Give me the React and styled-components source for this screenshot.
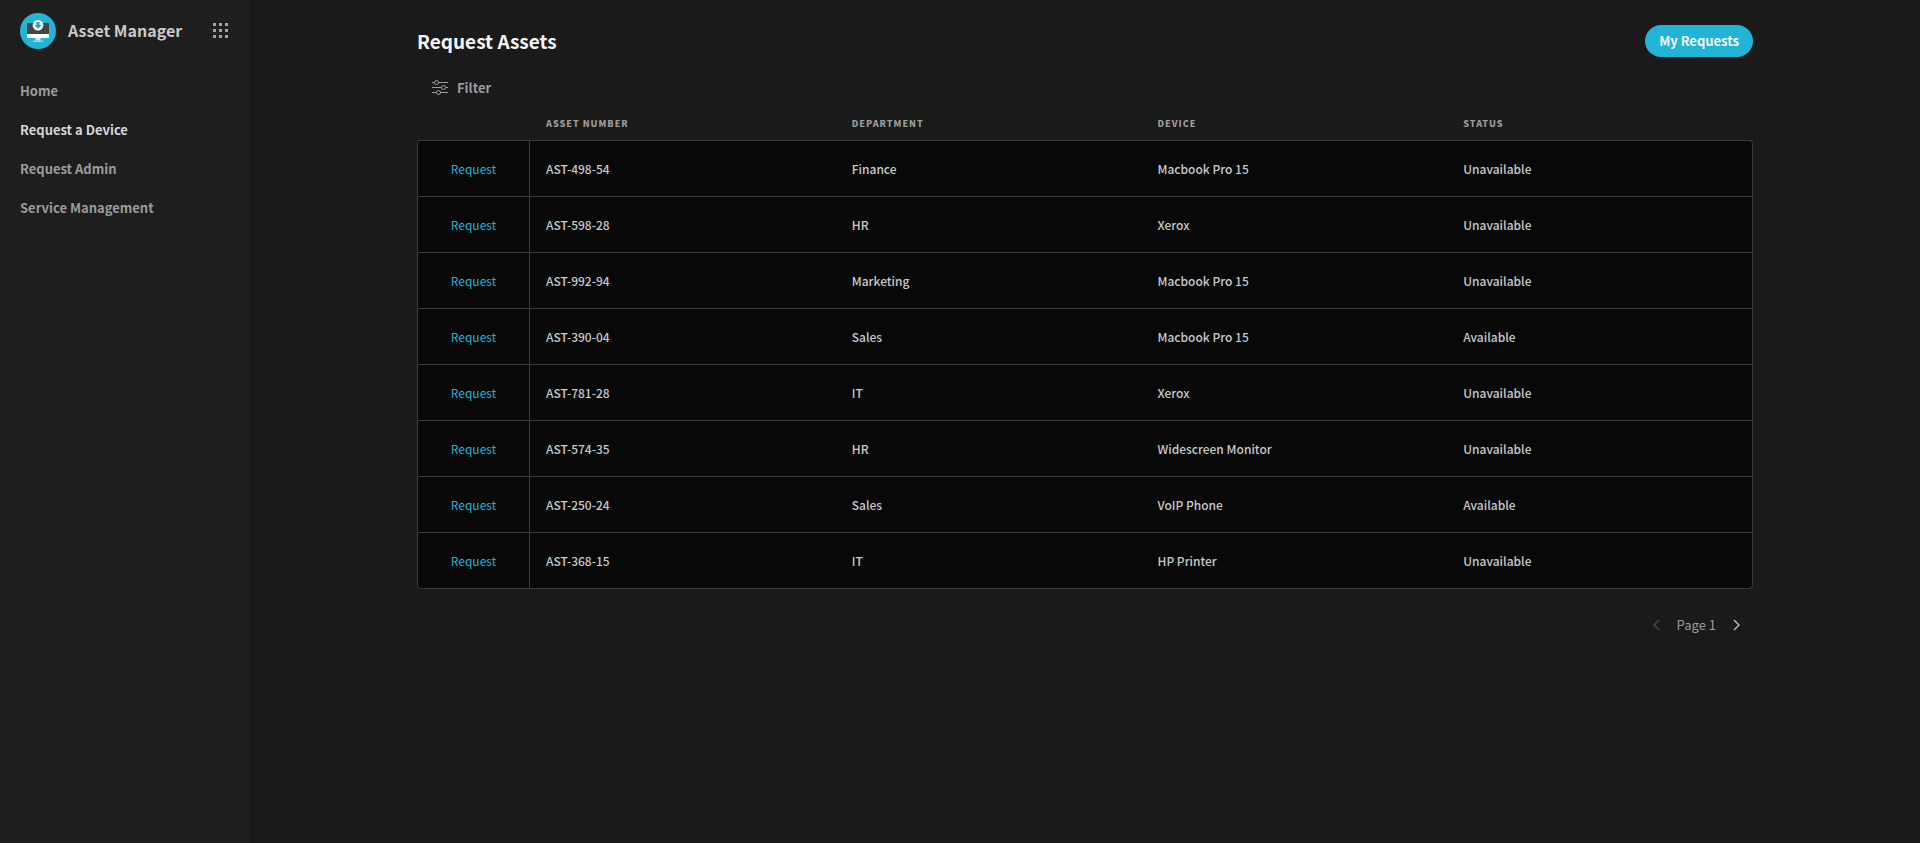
import styled, { createGlobalStyle } from 'styled-components';

const GlobalStyle = createGlobalStyle`
    :root {
        --primary: #22b4d4;
        --page-background: #1a1a1a;
        --sidebar-background: #1e1e1e;
        --row-background: #080808;
        --border-color: #3b3b3b;
        --text: #c9c9c9;
        --text-muted: #9b9b9b;
    }

    * {
        box-sizing: border-box;
    }

    body {
        margin: 0;
        background-color: var(--page-background);
        color: var(--text);
        font-family: 'Noto Sans CJK JP', 'Noto Sans', sans-serif;
        font-size: 13px;
        line-height: 20px;
    }

    button {
        border: none;
        background: none;
        padding: 0;
        color: inherit;
        font: inherit;
        cursor: pointer;
    }

    a {
        color: inherit;
        text-decoration: none;
    }

    svg {
        display: block;
    }
`

const Layout = styled.div`
    display: flex;
    min-height: 100vh;
`

const Sidebar = styled.aside`
    flex: 0 0 250px;
    padding: 13px 20px;
    background-color: var(--sidebar-background);
`

const Brand = styled.div`
    display: flex;
    align-items: center;
    gap: 12px;
    height: 36px;
    font-size: 16px;
    font-weight: bold;

    & > span {
        padding-bottom: 2px;
    }

    & > button {
        margin-left: auto;
        padding: 0 2px 2px;
    }
`

const Nav = styled.nav`
    display: flex;
    flex-direction: column;
    gap: 19px;
    margin-top: 32px;
`

const NavItem = styled.a`
    color: ${({ $selected }) => $selected ? '#d6d6d6' : 'var(--text-muted)'};
    font-weight: bold;
`

const Main = styled.main`
    flex: 1;
    min-width: 0;
    padding: 25px calc((100% - 250px) / 10);
`

const PageHeader = styled.header`
    display: flex;
    align-items: center;
    justify-content: space-between;
    height: 32px;
`

const Title = styled.h1`
    margin: 0;
    color: #f5f5f5;
    font-size: 19px;
    font-weight: bold;
`

const PrimaryButton = styled.button`
    height: 32px;
    padding: 0 14px;
    border-radius: 16px;
    background-color: var(--primary);
    color: #f5f5f5;
    font-weight: bold;
`

const FilterButton = styled.button`
    display: flex;
    align-items: center;
    gap: 9px;
    margin: 21px 0 0 15px;
    color: var(--text-muted);
    font-weight: bold;
`

const Table = styled.table`
    width: 100%;
    margin-top: 15px;
    table-layout: fixed;
    border-collapse: separate;
    border-spacing: 0;
    text-align: left;

    & th {
        height: 28px;
        padding: 0 16px 6px;
        border-bottom: 1px solid var(--border-color);
        color: var(--text-muted);
        font-size: 9px;
        font-weight: 900;
        letter-spacing: 1px;
        line-height: 16px;
        text-transform: uppercase;
    }

    & td {
        height: 56px;
        padding: 0 16px;
        border-bottom: 1px solid var(--border-color);
        background-color: var(--row-background);
        font-size: 12px;
        font-weight: 500;
    }

    & td:first-child {
        border-left: 1px solid var(--border-color);
        border-right: 1px solid var(--border-color);
        text-align: center;
    }

    & td:last-child {
        border-right: 1px solid var(--border-color);
    }

    & tr:first-child td:first-child {
        border-top-left-radius: 4px;
    }

    & tr:first-child td:last-child {
        border-top-right-radius: 4px;
    }

    & tr:last-child td:first-child {
        border-bottom-left-radius: 4px;
    }

    & tr:last-child td:last-child {
        border-bottom-right-radius: 4px;
    }
`

const ActionCol = styled.col`
    width: 113px;
`

const RequestButton = styled.button`
    color: var(--primary);
    font-weight: normal;
`

const Pagination = styled.div`
    display: flex;
    align-items: center;
    justify-content: flex-end;
    gap: 17px;
    margin-top: 26px;
    padding-right: 13px;
    color: var(--text-muted);
`

const PageButton = styled.button`
    color: #b5b5b5;

    &:disabled {
        color: #4a4a4a;
        cursor: default;
    }
`

const navItems = ['Home', 'Request a Device', 'Request Admin', 'Service Management'];

const assets = [
    { number: 'AST-498-54', department: 'Finance', device: 'Macbook Pro 15', status: 'Unavailable' },
    { number: 'AST-598-28', department: 'HR', device: 'Xerox', status: 'Unavailable' },
    { number: 'AST-992-94', department: 'Marketing', device: 'Macbook Pro 15', status: 'Unavailable' },
    { number: 'AST-390-04', department: 'Sales', device: 'Macbook Pro 15', status: 'Available' },
    { number: 'AST-781-28', department: 'IT', device: 'Xerox', status: 'Unavailable' },
    { number: 'AST-574-35', department: 'HR', device: 'Widescreen Monitor', status: 'Unavailable' },
    { number: 'AST-250-24', department: 'Sales', device: 'VoIP Phone', status: 'Available' },
    { number: 'AST-368-15', department: 'IT', device: 'HP Printer', status: 'Unavailable' },
];

const Logo = () => (
    <svg width="36" height="36" viewBox="0 0 36 36" aria-hidden="true">
        <circle cx="18" cy="18" r="18" fill="#22b4d4" />
        <path d="M7 10h22v12H7z" fill="#454545" />
        <path d="M7 21h22v3a1 1 0 0 1-1 1H8a1 1 0 0 1-1-1z" fill="#fff" />
        <path d="M15.500 25h5v2.500h-5z" fill="#d8eef3" />
        <path d="M13 27.500h10V29H13z" fill="#8edcec" />
        <circle cx="18" cy="12.300" r="5.300" fill="#fff" />
        <path d="M16.500 9h3v3h2L18 15.800 14.500 12h2z" fill="#1aa3c2" />
    </svg>
);

const GridIcon = () => (
    <svg width="15" height="15" viewBox="0 0 15 15" fill="#a3a3a3" aria-hidden="true">
        {[0, 6, 12].map(y => [0, 6, 12].map(x => (
            <rect key={`${x}-${y}`} x={x} y={y} width="3" height="3" />
        )))}
    </svg>
);

const FilterIcon = () => (
    <svg width="16" height="16" viewBox="0 0 16 16" fill="none" stroke="currentColor" aria-hidden="true">
        <path d="M0 2.500h2.500M6.500 2.500H16M0 7.500h9.500M13.500 7.500H16M0 12.500h4.500M8.500 12.500H16" />
        <circle cx="4.500" cy="2.500" r="2" />
        <circle cx="11.500" cy="7.500" r="2" />
        <circle cx="6.500" cy="12.500" r="2" />
    </svg>
);

const Chevron = ({ points }) => (
    <svg width="7" height="12" viewBox="0 0 7 12" fill="none" stroke="currentColor" strokeWidth="1.500" aria-hidden="true">
        <polyline points={points} />
    </svg>
);

const AssetTable = () => {
    return (
        <Table>
            <colgroup>
                <ActionCol />
                <col />
                <col />
                <col />
                <col />
            </colgroup>
            <thead>
                <tr>
                    <th aria-label="Actions" />
                    <th>Asset Number</th>
                    <th>Department</th>
                    <th>Device</th>
                    <th>Status</th>
                </tr>
            </thead>
            <tbody>
                {assets.map(asset => (
                    <tr key={asset.number}>
                        <td><RequestButton type='button'>Request</RequestButton></td>
                        <td>{asset.number}</td>
                        <td>{asset.department}</td>
                        <td>{asset.device}</td>
                        <td>{asset.status}</td>
                    </tr>
                ))}
            </tbody>
        </Table>
    );
}

const App = () => {
    return (
        <>
            <GlobalStyle />
            <Layout>
                <Sidebar>
                    <Brand>
                        <Logo />
                        <span>Asset Manager</span>
                        <button type='button' aria-label='Apps'><GridIcon /></button>
                    </Brand>
                    <Nav>
                        {navItems.map(item => (
                            <NavItem key={item} href='#' $selected={item === 'Request a Device'}>{item}</NavItem>
                        ))}
                    </Nav>
                </Sidebar>
                <Main>
                    <PageHeader>
                        <Title>Request Assets</Title>
                        <PrimaryButton type='button'>My Requests</PrimaryButton>
                    </PageHeader>
                    <FilterButton type='button'><FilterIcon />Filter</FilterButton>
                    <AssetTable />
                    <Pagination>
                        <PageButton type='button' aria-label='Previous page' disabled><Chevron points='6,1 1,6 6,11' /></PageButton>
                        <span>Page 1</span>
                        <PageButton type='button' aria-label='Next page'><Chevron points='1,1 6,6 1,11' /></PageButton>
                    </Pagination>
                </Main>
            </Layout>
        </>
    );
}

export default App;
